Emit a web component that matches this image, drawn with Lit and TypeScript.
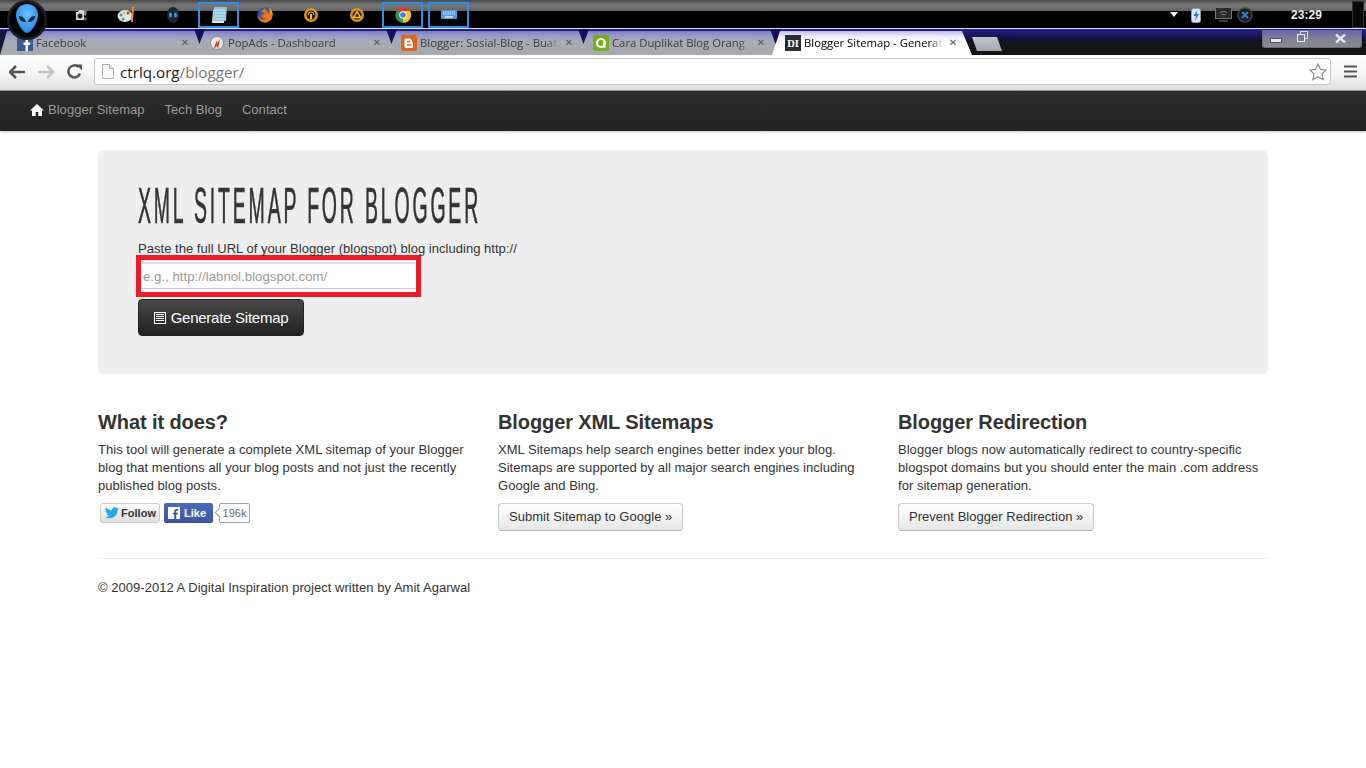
import { LitElement, html, css, svg } from "lit";
import { customElement } from "lit/decorators.js";

const icons = [
  svg`<path d="M5 7h2l1-2h4l1 1v9H5z" fill="#d8d8d8"/><circle cx="9" cy="11" r="2.500" fill="#222"/><path d="M13 4l3 2-1 5-2-1z" fill="#7d8791"/><path d="M13 12l3 1-1 3-2-1z" fill="#5c6670"/>`,
  svg`<ellipse cx="8" cy="11" rx="7.500" ry="6" fill="#dfe6e4"/><circle cx="4" cy="10" r="1.500" fill="#3a8fd0"/><circle cx="7" cy="8" r="1.500" fill="#d8c030"/><circle cx="11" cy="8" r="1.500" fill="#d33"/><circle cx="6" cy="14" r="1.500" fill="#3a3"/><path d="M15 2l2 0-1 15h-2z" fill="#e88a1c"/>`,
  svg`<ellipse cx="10" cy="10" rx="6" ry="8" fill="#1c2733"/><ellipse cx="7.500" cy="10" rx="1.500" ry="2.500" fill="#2d9fe0"/><ellipse cx="12.500" cy="10" rx="1.500" ry="2.500" fill="#2d9fe0"/>`,
  svg`<path d="M4 5h12l-1 13H3z" fill="#e8e4d4"/><path d="M5 2h13l-1 14H4z" fill="#8fc3dd"/><path d="M6 5h10M6 8h10M5.500 11h10M5.500 14h10" stroke="#d4e8f2" stroke-width="1"/>`,
  svg`<circle cx="10" cy="10" r="7.500" fill="#2a5aa8"/><path d="M2.500 10a7.500 7.500 0 1 0 13-5c0 2-1 3-2 3-1-2-3-3-4-5-1 2-3 2-3 4 2 0 3 1 3 2-1 1-3 0-3 2 0 1 2 3 5 2-3 3-8 1-9-3z" fill="#ee7418"/><path d="M14 3a7 7 0 0 1 3.500 7L15 7z" fill="#f5a623"/>`,
  svg`<circle cx="10" cy="10" r="7" fill="#e8920c"/><circle cx="10" cy="10" r="4.500" fill="#1a1a1a"/><path d="M9 9h2v5H9z" fill="#f5b53a"/><path d="M7 10a3 3 0 0 1 6 0" stroke="#f5b53a" fill="none"/>`,
  svg`<circle cx="10" cy="10" r="7" fill="#e8920c"/><circle cx="10" cy="10" r="4.500" fill="#1a1a1a"/><path d="M10 6.500l3.500 6h-7z" fill="none" stroke="#f5b53a" stroke-width="1.500"/>`,
  svg`<circle cx="10" cy="10" r="7.500" fill="#dd3b30"/><path d="M10 10L3.500 13.700A7.500 7.500 0 0 1 3.900 5.600z" fill="#2e9d49"/><path d="M10 10l3.700 7A7.500 7.500 0 0 1 3.500 13.700z" fill="#2e9d49"/><path d="M10 6h7a7.500 7.500 0 0 1-7 11.500z" fill="#f6c51a"/><circle cx="10" cy="10" r="3.700" fill="#fff"/><circle cx="10" cy="10" r="2.800" fill="#3f7fe0"/>`,
  svg`<rect x="2" y="5" width="16" height="9" rx="1" fill="#4a9be8"/><path d="M4 7h12M4 9h12" stroke="#dfeffc" stroke-dasharray="1.500 .7"/><path d="M6 12h8" stroke="#fff" stroke-width="1.200"/>`,
];
const framed = new Set([3, 7, 8]);

const tabs = [
  { title: "Facebook", ic: svg`<rect width="16" height="16" fill="#3b5998"/><path d="M11 16V10h2l.3-2.500H11V6c0-.8.300-1.200 1.200-1.200h1.200V2.600C12 2.500 8.500 2 8.500 6v1.500H6.500V10h2v6z" fill="#fff"/>` },
  { title: "PopAds - Dashboard", ic: svg`<circle cx="8" cy="8" r="6.500" fill="#e8e8e8" stroke="#8c8c8c"/><path d="M4.500 14l3-8 1 2 2.500-4-2 10-1-3z" fill="#d2491a"/>` },
  { title: "Blogger: Sosial-Blog - Buat", ic: svg`<rect width="16" height="16" rx="2" fill="#e0651b"/><path d="M5 3.500h4l2 2V7l1 1v3.500a1.500 1.500 0 0 1-1.500 1.500h-5.500A1.500 1.500 0 0 1 3.500 11.500V5A1.500 1.500 0 0 1 5 3.500z" fill="#fff"/><path d="M6 6.500h3M6 10h4.500" stroke="#e0651b" stroke-width="1.300"/>` },
  { title: "Cara Duplikat Blog Orang", ic: svg`<rect width="16" height="16" rx="3" fill="#75ad1c"/><circle cx="8" cy="8" r="4" fill="none" stroke="#fff" stroke-width="2.200"/><path d="M11 7v5h1.500" stroke="#fff" stroke-width="1.500" fill="none"/>` },
  { title: "Blogger Sitemap - Generate", ic: null, active: true },
];

@customElement("app-root")
export class AppRoot extends LitElement {
  static styles = css`
    :host { display: block; width: 1366px; height: 768px; overflow: hidden; background: #fff; position: relative; font-family: "Liberation Sans", Arial, sans-serif; color: #333; font-size: 13px; letter-spacing: .03px; line-height: 18px; }
    * { box-sizing: border-box; }
    svg { display: block; }

    .taskbar { height: 29px; background: linear-gradient(#484848 0, #787878 5px, #646464 11px, #020204 11px, #000 28px, #e0e0e8 28px); display: flex; align-items: flex-start; padding: 2px 0 0 60px; gap: 5px; position: relative; }
    .cell { width: 41px; height: 26px; display: flex; align-items: center; justify-content: center; border: 2px solid transparent; }
    .cell.framed { border-color: #2d8fe8; }
    .orb { position: absolute; left: 7px; top: 0; z-index: 5; }
    .tray { margin-left: auto; height: 27px; display: flex; align-items: center; margin-top: -2px; padding-top: 2px; }
    .tray-arrow { width: 0; height: 0; border: 4px solid transparent; border-top: 5px solid #fff; border-bottom: 0; margin-right: 13px; }
    .batt { margin-right: 14px; }
    .mon { margin-right: 5px; }
    .clock { font-weight: 700; color: #eee; font-size: 12px; width: 32px; margin-left: 38px; margin-right: 29px; }
    .desk { width: 12px; height: 27px; border: 1px solid #333; background: #0a0a0a; margin-right: 2px; }

    .tabstrip { height: 26px; background: linear-gradient(#22228a 0, #1a1a70 4px, #12123c 10px, #151515 15px, #141414 100%); display: flex; padding: 2px 0 0 0; position: relative; }
    .tab { position: relative; width: 192px; height: 24px; flex: none; background: linear-gradient(#7c7cce 0, #9a9cc6 5px, #a8abb4 11px, #a6a9b0 100%); display: flex; align-items: center; padding: 0 0 0 9px; font-size: 11.300px; color: #3c3c3c; letter-spacing: 0; font-family: "Open Sans", "Liberation Sans", sans-serif; }
    .tab::after { content: ""; position: absolute; z-index: 2; left: calc(100% - 6px); top: -2px; width: 11px; height: 15px; background: #10105c; clip-path: polygon(0 0, 100% 0, 50% 100%); }
    .tab.first { width: 200px; padding-left: 17px; }
    .tab.first::before { content: ""; position: absolute; left: 0; top: 0; width: 7px; height: 24px; background: #16163a; clip-path: polygon(0 0, 100% 0, 0 100%); }
    .tab.active { width: 200px; margin-left: -4px; padding-left: 13px; z-index: 3; background: linear-gradient(#bcbcf0 0, #f0f0fc 6px, #fff 11px); color: #000; clip-path: polygon(8px 0, 190px 0, 200px 24px, 0 24px); }
    .tab.active::after { display: none; }
    .tab svg { flex: none; margin-right: 3px; }
    .title { flex: none; width: 140px; overflow: hidden; white-space: nowrap; -webkit-mask-image: linear-gradient(to right, #000 90%, transparent); mask-image: linear-gradient(to right, #000 90%, transparent); }
    .x { margin-left: 4px; font-size: 10px; font-weight: 700; color: #555; width: 10px; text-align: center; font-family: "DejaVu Sans", sans-serif; }
    .newtab { width: 30px; height: 14px; margin: 6px 0 0 0; background: linear-gradient(#c4c6d0, #a4a6ae); clip-path: polygon(0 0, 25px 0, 30px 14px, 5px 14px); flex: none; }
    .winctl { position: absolute; left: 1262px; top: 1px; width: 100px; height: 18px; background: linear-gradient(#6464b0, #82848e 60%, #888a94); border: 1px solid #6c6c74; border-top: 0; display: flex; align-items: center; padding: 0 0 0 7px; border-radius: 0 0 3px 3px; }
    .restore { margin: -4px 0 0 15px; }
    .close { margin: -1px 0 0 27px; }
    .minim { margin-top: 5px; }

    .toolbar { height: 36px; background: linear-gradient(#fff 0, #f6f6f6 50%, #e0e0e0 100%); display: flex; align-items: center; padding: 0 6px 2px 9px; border-bottom: 1px solid #9a9a9a; }
    .nav-ic { flex: none; }
    .fwd, .reload { margin-left: 13px; }
    .omni { flex: none; width: 1237px; height: 27px; margin-left: 12px; background: #fff; border: 1px solid #c4c4c4; border-radius: 3px; display: flex; align-items: center; padding: 0 3px 0 7px; font-family: "Open Sans", "Liberation Sans", sans-serif; font-size: 15.200px; letter-spacing: 0; color: #777; }
    .omni b { color: #1c1c1c; font-weight: 400; }
    .star { margin-left: auto; }
    .page-ic { margin-right: 6px; }
    .menu { margin-left: 13px; }

    .navbar { height: 40px; background: linear-gradient(#2c2c2c, #222); box-shadow: 0 1px 3px rgba(0,0,0,.25); display: flex; align-items: center; padding: 0 0 2px 30px; gap: 20px; color: #999; }
    .brand { display: flex; align-items: center; gap: 4px; }

    .container { width: 1170px; margin: 19px 0 0 98px; }
    .jumbo { height: 224px; background: #eee; border-radius: 6px; padding: 32px 40px 0; }
    h1 { margin: 0; height: 48px; width: 900px; font: 400 50px/48px "Liberation Sans Narrow", "Liberation Sans", sans-serif; color: #333; -webkit-text-stroke: .7px #333; transform: scaleX(.39); transform-origin: 0 50%; white-space: nowrap; letter-spacing: 7.200px; }
    .lede { margin: 10px 0 0; }
    .red { width: 285px; height: 42px; margin: -3px 0 0 -2px; border: 5px solid #ed1c24; background: #fff; padding-top: 2px; }
    .field { height: 27px; border-top: 2px solid #ddd; border-bottom: 1px solid #ccc; color: #999; padding: 0 2px; line-height: 26px; font-size: 13.200px; letter-spacing: .03px; }
    .go { width: 166px; height: 37px; margin-top: 2px; background: linear-gradient(#484848, #222); border-radius: 4px; border: 1px solid #222; color: #fff; display: flex; align-items: center; justify-content: center; gap: 5px; font-size: 15px; letter-spacing: -.25px; }

    .cols { display: grid; grid-template-columns: repeat(3, 370px); column-gap: 30px; margin-top: 36px; height: 149px; border-bottom: 1px solid #eee; }
    h2 { margin: 0 0 7px; font-size: 20px; font-weight: 700; line-height: 24px; color: #333; letter-spacing: -.1px; }
    .cols p { margin: 0; }
    .btn { display: inline-flex; align-items: center; height: 28px; padding: 0 10px; margin-top: 8px; border: 1px solid #ccc; border-bottom-color: #b3b3b3; border-radius: 4px; background: linear-gradient(#fff, #e6e6e6); }
    .social { display: flex; align-items: center; margin: 8px 0 0 2px; font-size: 11px; }
    .tw { width: 60px; height: 20px; border: 1px solid #ccc; border-radius: 3px; background: linear-gradient(#fff, #dedede); display: flex; align-items: center; gap: 2px; padding-left: 4px; font-weight: 700; color: #333; }
    .fb { width: 49px; height: 20px; margin-left: 4px; border-radius: 2px; background: linear-gradient(#4c69ba, #3b55a0); color: #fff; font-weight: 700; display: flex; align-items: center; gap: 4px; padding-left: 4px; }
    .count { width: 31px; height: 20px; margin-left: 6px; border: 1px solid #9aa0b4; border-radius: 2px; color: #666; display: flex; align-items: center; justify-content: center; position: relative; background: #fff; }
    .count::before { content: ""; position: absolute; left: -4px; top: 5px; width: 6px; height: 6px; background: #fff; border-left: 1px solid #9aa0b4; border-bottom: 1px solid #9aa0b4; transform: rotate(45deg); }
    .foot { margin: 20px 0 0; }
  `;

  render() {
    return html`
      <div class="taskbar">
        <svg class="orb" width="40" height="41" viewBox="0 0 40 41">
          <defs><radialGradient id="hd" cx=".5" cy=".35" r=".7"><stop offset="0" stop-color="#6fc2ff"/><stop offset="1" stop-color="#1f7fe0"/></radialGradient></defs>
          <circle cx="20" cy="20" r="20" fill="#1b1e22"/><circle cx="20" cy="20" r="17.500" fill="#030405"/>
          <path d="M20 4c7 0 11 5 11 11 0 7-7 18-11 18S9 22 9 15C9 9 13 4 20 4z" fill="url(#hd)"/>
          <path d="M12 16c4 0 6 3 7 6-4 0-7-2-7-6zM28 16c-4 0-6 3-7 6 4 0 7-2 7-6z" fill="#07233f"/>
        </svg>
        ${icons.map((ic, i) => html`<div class="cell ${framed.has(i) ? "framed" : ""}"><svg width="20" height="20" viewBox="0 0 20 20">${ic}</svg></div>`)}
        <div class="tray">
          <div class="tray-arrow"></div>
          <svg class="batt" width="10" height="16" viewBox="0 0 10 16"><rect x=".5" y="1.500" width="9" height="14" rx="2" fill="#d8e8f8" stroke="#8899aa"/><path d="M6 3L2.500 9H5l-1 5 4-7H5.500z" fill="#1b76e0"/></svg>
          <svg class="mon" width="17" height="15" viewBox="0 0 17 15"><rect x=".5" y=".5" width="16" height="11" fill="#2a2a2a" stroke="#777"/><path d="M5 6a5 5 0 0 1 7 0M6.500 8a3 3 0 0 1 4 0" stroke="#888" fill="none"/><path d="M4 14h9" stroke="#777"/></svg>
          <svg width="16" height="16" viewBox="0 0 16 16"><circle cx="8" cy="8" r="7" fill="#1a1a1a" stroke="#444" stroke-width="1.500"/><path d="M5 5l6 6M11 5l-6 6" stroke="#2b7fdc" stroke-width="2.200"/></svg>
          <div class="clock">23:29</div>
          <div class="desk"></div>
        </div>
      </div>

      <div class="tabstrip">
        ${tabs.map((t, i) => html`<div class="tab ${i === 0 ? "first" : ""} ${t.active ? "active" : ""}">
          ${t.ic
            ? html`<svg width="16" height="16" viewBox="0 0 16 16">${t.ic}</svg>`
            : html`<svg width="16" height="16" viewBox="0 0 16 16"><rect width="16" height="16" fill="#2a2a33"/><text x="8" y="12" text-anchor="middle" fill="#fff" font-size="10.500" font-weight="700" font-family="Liberation Serif, serif">DI</text></svg>`}
          <span class="title">${t.title}</span><span class="x">✕</span>
        </div>`)}
        <div class="newtab"></div>
        <div class="winctl">
          <svg class="minim" width="12" height="6" viewBox="0 0 12 6"><rect x=".5" y=".5" width="11" height="4" fill="#e8e8f4" stroke="#555"/></svg>
          <svg class="restore" width="11" height="11" viewBox="0 0 11 11"><rect x="3.500" y=".5" width="7" height="7" fill="none" stroke="#dde"/><rect x=".5" y="3.500" width="7" height="7" fill="#777a90" stroke="#eef"/></svg>
          <svg class="close" width="11" height="9" viewBox="0 0 11 9"><path d="M1 .5l9 8M10 .5l-9 8" stroke="#e8e8f4" stroke-width="2.400"/></svg>
        </div>
      </div>

      <div class="toolbar">
        <svg class="nav-ic" width="16" height="14" viewBox="0 0 16 14"><path d="M7 1L1 7l6 6M1.500 7H16" fill="none" stroke="#555" stroke-width="2.600"/></svg>
        <svg class="nav-ic fwd" width="16" height="14" viewBox="0 0 16 14"><path d="M9 1l6 6-6 6M14.500 7H0" fill="none" stroke="#c4c4c4" stroke-width="2.600"/></svg>
        <svg class="nav-ic reload" width="15" height="15" viewBox="0 0 15 15"><path d="M13 9.500A6 6 0 1 1 11.500 3" fill="none" stroke="#555" stroke-width="2.500"/><path d="M9 .5h6v6z" fill="#555"/></svg>
        <div class="omni">
          <svg class="page-ic" width="12" height="15" viewBox="0 0 12 15"><path d="M.5.500h7l4 4v10H.500z" fill="#fafafa" stroke="#aaa"/><path d="M7.500.500v4h4" fill="#e8e8e8" stroke="#aaa"/></svg>
          <span><b>ctrlq.org</b>/blogger/</span>
          <svg class="star" width="18" height="18" viewBox="0 0 18 18"><path d="M9 1l2.400 5.400 5.900.6-4.400 3.900 1.300 5.800L9 13.700l-5.200 3 1.300-5.800L.7 7l5.900-.6z" fill="#fff" stroke="#888" stroke-width="1.100"/></svg>
        </div>
        <svg class="menu" width="13" height="13" viewBox="0 0 13 13"><path d="M0 1.500h13M0 6.500h13M0 11.500h13" stroke="#555" stroke-width="2.200"/></svg>
      </div>

      <div class="navbar">
        <div class="brand"><svg width="14" height="12" viewBox="0 0 14 12"><path d="M7 0L0 6.500h2V12h3.700V8h2.600v4H12V6.500h2z" fill="#fff"/></svg>Blogger Sitemap</div>
        <div>Tech Blog</div>
        <div>Contact</div>
      </div>

      <div class="container">
        <div class="jumbo">
          <h1>XML SITEMAP FOR BLOGGER</h1>
          <p class="lede">Paste the full URL of your Blogger (blogspot) blog including http://</p>
          <div class="red"><div class="field">e.g., http://labnol.blogspot.com/</div></div>
          <div class="go">
            <svg width="12" height="12" viewBox="0 0 12 12"><rect x=".5" y=".5" width="11" height="11" fill="none" stroke="#fff"/><path d="M2 2.500h8M2 4.500h8M2 6.500h8M2 8.500h8" stroke="#fff"/></svg>
            Generate Sitemap
          </div>
        </div>

        <div class="cols">
          <div>
            <h2>What it does?</h2>
            <p>This tool will generate a complete XML sitemap of your Blogger blog that mentions all your blog posts and not just the recently published blog posts.</p>
            <div class="social">
              <div class="tw"><svg width="14" height="12" viewBox="0 0 14 12"><path d="M14 1.500c-.5.200-1 .400-1.600.400.600-.300 1-.800 1.200-1.500-.5.300-1.100.600-1.800.700A2.900 2.900 0 0 0 6.900 3.300C4.500 3.200 2.400 2 1 .300c-.800 1.300-.400 3 .900 3.900-.500 0-.900-.100-1.300-.400 0 1.400 1 2.600 2.300 2.900-.400.100-.900.100-1.300 0 .400 1.200 1.500 2 2.700 2A5.800 5.800 0 0 1 0 10c5.500 3.200 13-.100 12.600-7.300.600-.300 1-.800 1.400-1.200z" fill="#2aa3ef"/></svg>Follow</div>
              <div class="fb"><svg width="12" height="12" viewBox="0 0 12 12"><rect width="12" height="12" fill="#fff"/><path d="M8.200 12V7.500h1.500l.2-1.800H8.200V4.600c0-.5.200-.9.900-.9H10V2.100C8.500 1.800 6.300 2 6.300 4.300v1.400H4.800v1.800h1.500V12z" fill="#3b5998"/></svg>Like</div>
              <div class="count">196k</div>
            </div>
          </div>
          <div>
            <h2>Blogger XML Sitemaps</h2>
            <p>XML Sitemaps help search engines better index your blog. Sitemaps are supported by all major search engines including Google and Bing.</p>
            <div class="btn">Submit Sitemap to Google »</div>
          </div>
          <div>
            <h2>Blogger Redirection</h2>
            <p>Blogger blogs now automatically redirect to country-specific blogspot domains but you should enter the main .com address for sitemap generation.</p>
            <div class="btn">Prevent Blogger Redirection »</div>
          </div>
        </div>
        <p class="foot">© 2009-2012 A Digital Inspiration project written by Amit Agarwal</p>
      </div>
    `;
  }
}
